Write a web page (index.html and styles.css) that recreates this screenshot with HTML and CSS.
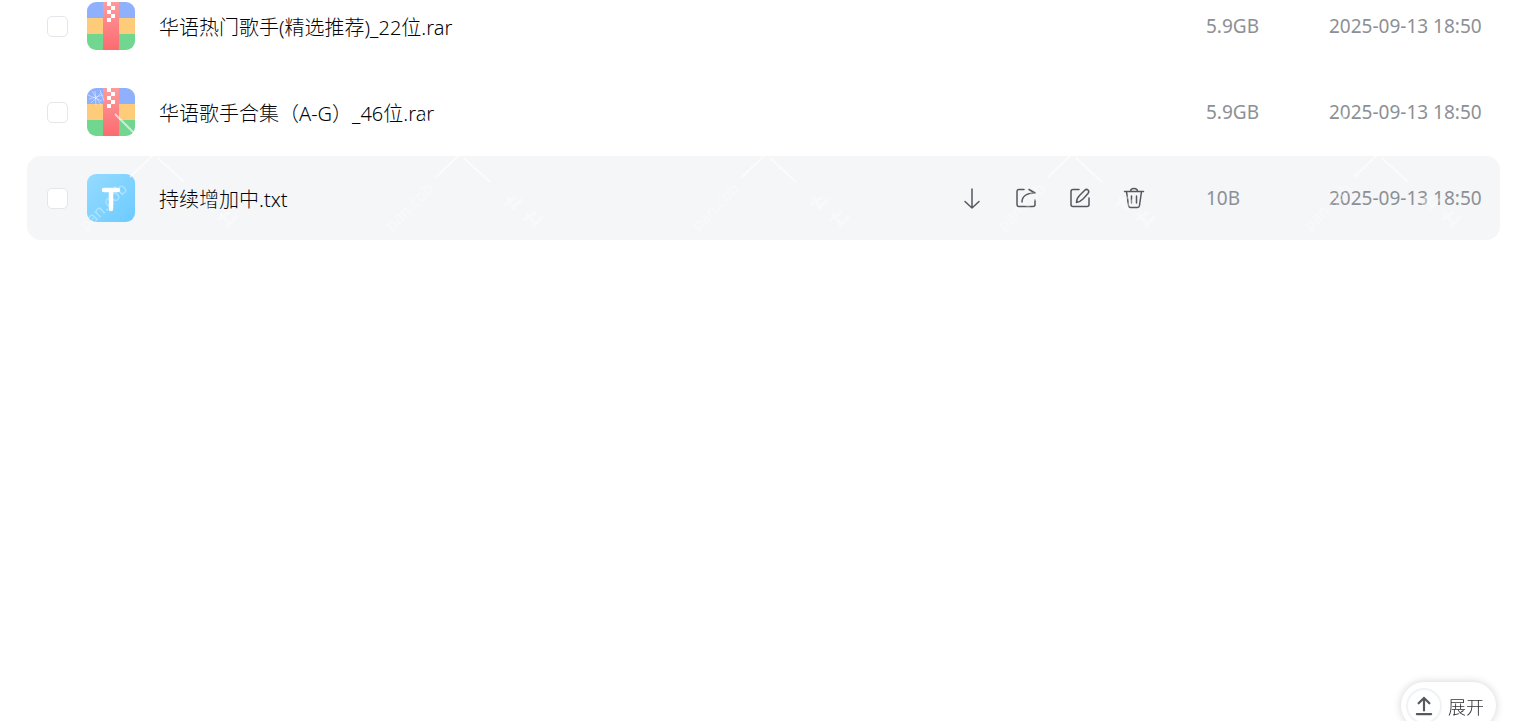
FILE: index.html
```html
<!DOCTYPE html>
<html lang="zh-CN">
<head>
    <meta charset="UTF-8">
    <meta name="viewport" content="width=device-width, initial-scale=1.0">
    <title>文件列表</title>
    <link rel="stylesheet" href="styles.css">
</head>
<body>
    <!-- shared icon shapes -->
    <svg class="defs" width="0" height="0" aria-hidden="true">
        <defs>
            <linearGradient id="zipRed" x1="0" y1="0" x2="0" y2="1">
                <stop offset="0" stop-color="#ff9a9c"/>
                <stop offset="1" stop-color="#fb6b6f"/>
            </linearGradient>
            <linearGradient id="txtBlue" x1="0" y1="0" x2="1" y2="1">
                <stop offset="0" stop-color="#96dbff"/>
                <stop offset="1" stop-color="#6bcbff"/>
            </linearGradient>
            <clipPath id="tile"><rect width="48" height="48" rx="9"/></clipPath>
            <symbol id="zip" viewBox="0 0 48 48">
                <g clip-path="url(#tile)">
                    <path fill="#8fb0fc" d="M0 0h48v16H0z"/>
                    <path fill="#fecb7a" d="M0 16h48v16H0z"/>
                    <path fill="#71d790" d="M0 32h48v16H0z"/>
                    <path fill="url(#zipRed)" d="M16 0h16v48H16z"/>
                    <path fill="#fff" d="M20 0h4v4h-4zM24 4h4v4h-4zM20 8h4v4h-4zM24 12h4v4h-4zM20 16h4v4h-4z"/>
                </g>
            </symbol>
            <symbol id="txt" viewBox="0 0 48 48">
                <rect width="48" height="48" rx="9" fill="url(#txtBlue)"/>
                <path d="M17 16h14M24 16v19" fill="none" stroke="#fff" stroke-width="4.500" stroke-linecap="round"/>
            </symbol>
            <pattern id="mark" x="-27" y="0" width="306" height="256" patternUnits="userSpaceOnUse">
                <path d="M130 193l22-21M158 174l26 24M115 130l20 20" fill="none" stroke="#fff" stroke-width="2" stroke-opacity=".6"/>
                <path d="M198 221l12-8M201 213l8 12M206 225l10-10M218 236l12-8M220 229l10 12M227 243l10-11" fill="none" stroke="#fff" stroke-width="3" stroke-opacity=".35"/>
                <path d="M88 111l14 6M91 119l10-10M95 107l1 15M100 106l4 11M89 115l14-4M92 107l9 14" fill="none" stroke="#fff" stroke-width="1" stroke-opacity=".45"/>
                <text class="mark-text" transform="translate(86 248) rotate(-45)">pan.cob</text>
            </pattern>
        </defs>
    </svg>

    <main class="file-list">
        <div class="file-row">
            <input type="checkbox" class="check" aria-label="选择 华语热门歌手(精选推荐)_22位.rar">
            <svg class="file-icon" aria-hidden="true"><use href="#zip"/></svg>
            <a class="file-name" href="#">华语热门歌手(精选推荐)_22位.rar</a>
            <span class="size">5.9GB</span>
            <span class="date">2025-09-13 18:50</span>
        </div>
        <div class="file-row">
            <input type="checkbox" class="check" aria-label="选择 华语歌手合集（A-G）_46位.rar">
            <svg class="file-icon" aria-hidden="true"><use href="#zip"/></svg>
            <a class="file-name" href="#">华语歌手合集（A-G）_46位.rar</a>
            <span class="size">5.9GB</span>
            <span class="date">2025-09-13 18:50</span>
        </div>
        <div class="file-row active">
            <input type="checkbox" class="check" aria-label="选择 持续增加中.txt">
            <svg class="file-icon" aria-hidden="true"><use href="#txt"/></svg>
            <a class="file-name" href="#">持续增加中.txt</a>
            <div class="actions">
                <button type="button" aria-label="下载">
                    <svg viewBox="0 0 24 24"><path d="M12 3v19M5 15.500l7 6.500 7-6.500"/></svg>
                </button>
                <button type="button" aria-label="分享">
                    <svg viewBox="0 0 24 24"><path d="M10 3.500H5q-2 0-2 2v13q0 2 2 2h14q2 0 2-2V14M8 16c0-5 4-9 13-9L15 3.500"/></svg>
                </button>
                <button type="button" aria-label="重命名">
                    <svg viewBox="0 0 24 24"><path d="M11 3.500H5q-2 0-2 2v13q0 2 2 2h14q2 0 2-2V12M8.500 16.500q0-4 3-7l5-5q2-2 3.500-.5t0 3.500l-5 5.500q-3 3-6.500 3.500z"/></svg>
                </button>
                <button type="button" aria-label="删除">
                    <svg viewBox="0 0 24 24"><path d="M2.500 5.500h19M8.500 5.500c0-4 7-4 7 0M4.500 5.500l2 14q.3 2 2 2h7q1.700 0 2-2l2-14M9.500 10v7M14.500 10v7"/></svg>
                </button>
            </div>
            <span class="size">10B</span>
            <span class="date">2025-09-13 18:50</span>
        </div>
        <svg class="watermark" aria-hidden="true"><rect width="100%" height="100%" fill="url(#mark)"/></svg>
    </main>

    <button type="button" class="expand">
        <span class="expand-icon">
            <svg viewBox="0 0 20 22"><path d="M10 16V2M4 8l6-6 6 6M2 20h16"/></svg>
        </span>
        展开
    </button>
</body>
</html>
```

FILE: styles.css
```css
body {
    margin: 0;
    min-height: 100vh;
    overflow: hidden;
    background: #fff;
    font-family: "Noto Sans", "Noto Sans CJK SC", sans-serif;
    color: #25262b;
}
.defs {
    position: absolute;
}
/* list is scrolled a little past its first row */
.file-list {
    position: relative;
    display: flex;
    flex-direction: column;
    gap: 2px;
    margin: -16px 33px 0 27px;
}
.file-row {
    display: flex;
    align-items: center;
    height: 84px;
    padding-left: 20px;
    border-radius: 14px;
}
.file-row.active {
    background: #f5f6f8;
}
.check {
    appearance: none;
    width: 21px;
    height: 21px;
    margin: 0 19px 0 0;
    background: #fff;
    border: 1px solid #e4e6ea;
    border-radius: 5px;
}
.check:checked {
    background: #06a7ff;
}
.file-icon {
    flex: none;
    width: 48px;
    height: 48px;
    margin-right: 24px;
}
.file-name {
    flex: 1;
    padding-top: 3px;
    font-size: 20px;
    font-weight: 300;
    line-height: 28px;
    color: #03040a;
    text-decoration: none;
}
.actions {
    display: flex;
    gap: 30px;
    margin-right: 60px;
}
.actions button {
    width: 24px;
    height: 24px;
    padding: 0;
    border: none;
    background: none;
    cursor: pointer;
}
.actions svg {
    display: block;
    fill: none;
    stroke: #55585e;
    stroke-width: 1.5;
    stroke-linecap: round;
    stroke-linejoin: round;
}
.size, .date {
    font-size: 19px;
    line-height: 28px;
    color: #8c9096;
}
.size {
    width: 123px;
}
.date {
    width: 171px;
    white-space: nowrap;
}
.watermark {
    position: absolute;
    top: 0;
    left: 0;
    width: 100%;
    height: 100%;
    pointer-events: none;
}
.mark-text {
    font-size: 16px;
    fill: #fff;
    fill-opacity: 0.35;
}
.expand {
    position: fixed;
    right: 37px;
    bottom: -8px;
    display: flex;
    align-items: center;
    gap: 6px;
    height: 47px;
    padding: 0 12px 0 5px;
    border: none;
    border-radius: 24px;
    background: #fff;
    box-shadow: 0 0 8px rgba(0, 0, 0, 0.18);
    font-family: inherit;
    font-size: 18px;
    font-weight: 300;
    color: #303236;
    cursor: pointer;
}
.expand-icon {
    display: flex;
    align-items: center;
    justify-content: center;
    width: 32px;
    height: 32px;
    border: 2px solid #f1f2f4;
    border-radius: 50%;
}
.expand-icon svg {
    width: 18px;
    height: 20px;
    fill: none;
    stroke: #55585e;
    stroke-width: 2.4;
    stroke-linecap: round;
    stroke-linejoin: round;
}
```
